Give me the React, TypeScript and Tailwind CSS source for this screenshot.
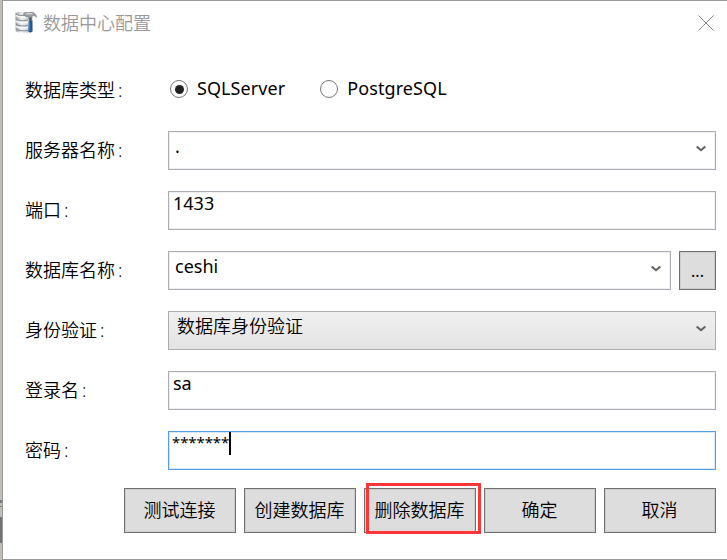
import type { ReactNode } from "react";

function Chevron() {
  return (
    <svg width="10" height="8" viewBox="0 0 10 8" className="shrink-0" fill="none">
      <path d="M0.7 1.6L5 5.3L9.3 1.6" stroke="#606060" strokeWidth="2" />
    </svg>
  );
}

function DatabaseIcon() {
  return (
    <svg width="22" height="22" viewBox="0 0 22 22" className="-mt-[2px] shrink-0">
      <defs>
        <linearGradient id="disk" x1="0" x2="1">
          <stop offset="0" stopColor="#9fa3a5" />
          <stop offset="0.35" stopColor="#eef0f1" />
          <stop offset="1" stopColor="#b0b3b5" />
        </linearGradient>
      </defs>
      <path d="M0.5 2.5C1 0 11 0 12 2.5L13 7L18 9V20C16 22.5 2 22.5 0.7 20Z" fill="url(#disk)" />
      <path d="M0.5 2.5C2 4.8 9 5 12 3.5M0.5 7.5C3 10 10 10 13 9M0.7 13C4 15.3 9 15.3 13 14.5M0.7 18C4 20 9 20 13 19.5" fill="none" stroke="#84898c" strokeWidth="1" />
      <path d="M1 4.5C4 6.5 9 6.5 12 5.5M1.2 10.3C4 12 9 12 13 11.3M1.2 15.6C4 17 9 17 13 16.6" fill="none" stroke="#fafafa" strokeWidth="1.5" />
      <path d="M8.2 3.3L10.2 1.5L14 1.8C17.5 0.4 21 2.2 21.5 6.2C20 4.4 18.5 4.2 17 5V8H13.7V5.4H10.5Z" fill="#9b9fa2" stroke="#777c80" strokeWidth="0.7" />
      <path d="M11 2.8H17.5" stroke="#e9eced" strokeWidth="1" />
      <path d="M14.3 6.5H16.6V10H14.3Z" fill="#4c5a65" />
      <path d="M13.8 10.5Q15.5 8.6 17.1 10.5L17.3 20.5Q15.5 22.3 13.3 20.5Z" fill="#17599c" />
      <path d="M14.7 10.8V20" stroke="#4e8fc8" strokeWidth="0.8" />
    </svg>
  );
}

function Row({ label, children }: { label: string; children: ReactNode }) {
  return (
    <div className="flex h-[39px] items-center">
      <div className="w-[143px] shrink-0 leading-[27px] font-[350]">
        {label}
        <span className="ml-[3px]">:</span>
      </div>
      {children}
    </div>
  );
}

const fieldBox =
  "flex h-[39px] grow border border-[#abadb3] shadow-[inset_0_0_0_1px_#eeeef3] leading-[22px]";

function Radio({ label, checked = false }: { label: string; checked?: boolean }) {
  return (
    <div className="flex items-center gap-[9px]">
      <span className="flex size-[18px] items-center justify-center rounded-full border-[1.5px] border-[#777777]">
        {checked && <span className="size-[9px] rounded-full bg-[#212121]" />}
      </span>
      <span className="-mt-[2px] leading-6 tracking-[0.08px]">{label}</span>
    </div>
  );
}

const buttonBox =
  "flex h-[45px] w-[112px] items-center justify-center border border-[#707070] bg-[#dddddd] pr-px font-[350] shadow-[inset_0_0_0_1px_#cdcdcd]";

export default function App() {
  return (
    <div className="flex h-[560px] w-[727px] overflow-hidden bg-white font-['Noto_Sans','Noto_Sans_CJK_SC',sans-serif] text-[18px] text-black">
      <div className="flex w-[2px] shrink-0 flex-col bg-[#c2bdb5]">
        <div className="mt-[500px] h-[3px] bg-[#7b7b7d]" />
        <div className="mt-[3px] h-px bg-[#838385]" />
        <div className="mt-[10px] h-[26px] bg-[#727274]" />
      </div>
      <div className="flex grow flex-col border-y border-l border-[#999999]">
        <header className="flex h-[44px] items-center pr-[13px] pl-3">
          <DatabaseIcon />
          <h1 className="ml-[6px] grow text-[18px] leading-[27px] font-[350] text-[#999999]">数据中心配置</h1>
          <svg width="16" height="16" viewBox="0 0 16 16" fill="none" className="-mt-px">
            <path d="M0.5 0.5L15.5 15.5M15.5 0.5L0.5 15.5" stroke="#858585" strokeWidth="1" />
          </svg>
        </header>
        <main className="mt-[26px] flex flex-col gap-[21px] pr-[11px] pl-[22px]">
          <Row label="数据库类型">
            <div className="-mt-[3px] flex items-center gap-[35px] pl-[2px]">
              <Radio label="SQLServer" checked />
              <Radio label="PostgreSQL" />
            </div>
          </Row>
          <Row label="服务器名称">
            <div className={`${fieldBox} items-start justify-between pt-[3px] pr-[9px] pl-[6px]`}>
              <span>.</span>
              <span className="mt-[10px] flex"><Chevron /></span>
            </div>
          </Row>
          <Row label="端口">
            <div className={`${fieldBox} pl-[4px]`}>1433</div>
          </Row>
          <Row label="数据库名称">
            <div className={`${fieldBox} items-start justify-between pt-[3px] pr-[9px] pl-[6px]`}>
              <span>ceshi</span>
              <span className="mt-[10px] flex"><Chevron /></span>
            </div>
            <div className="ml-2 flex h-[39px] w-[37px] items-center justify-center border border-[#707070] bg-[#dddddd] text-[16px] shadow-[inset_0_0_0_1px_#cdcdcd]">
              ...
            </div>
          </Row>
          <Row label="身份验证">
            <div className="flex h-[39px] grow items-start justify-between border border-[#acacac] bg-linear-to-b from-[#f0f0f0] to-[#e3e3e3] pt-[3px] pr-[9px] pl-[8px] leading-[22px]">
              <span className="font-[350]">数据库身份验证</span>
              <span className="mt-[10px] flex"><Chevron /></span>
            </div>
          </Row>
          <Row label="登录名">
            <div className={`${fieldBox} pl-[4px]`}>sa</div>
          </Row>
          <Row label="密码">
            <div className="flex h-[39px] grow border border-[#569de5] pl-[3px] leading-[22px] shadow-[inset_0_0_0_1px_#d7e8f9]">
              <span className="w-[57px] text-[15px] leading-[20px] tracking-[-0.1px]">*******</span>
              <span className="h-[23px] w-[2px] bg-black" />
            </div>
          </Row>
        </main>
        <footer className="mt-[18px] flex justify-end gap-2 pr-[11px]">
          <div className={buttonBox}>测试连接</div>
          <div className={buttonBox}>创建数据库</div>
          <div className={`${buttonBox} relative`}>
            删除数据库
            <span className="absolute -top-[6px] left-[1px] h-[51px] w-[115px] border-3 border-[#ff3639]" />
          </div>
          <div className={buttonBox}>确定</div>
          <div className={buttonBox}>取消</div>
        </footer>
      </div>
    </div>
  );
}
